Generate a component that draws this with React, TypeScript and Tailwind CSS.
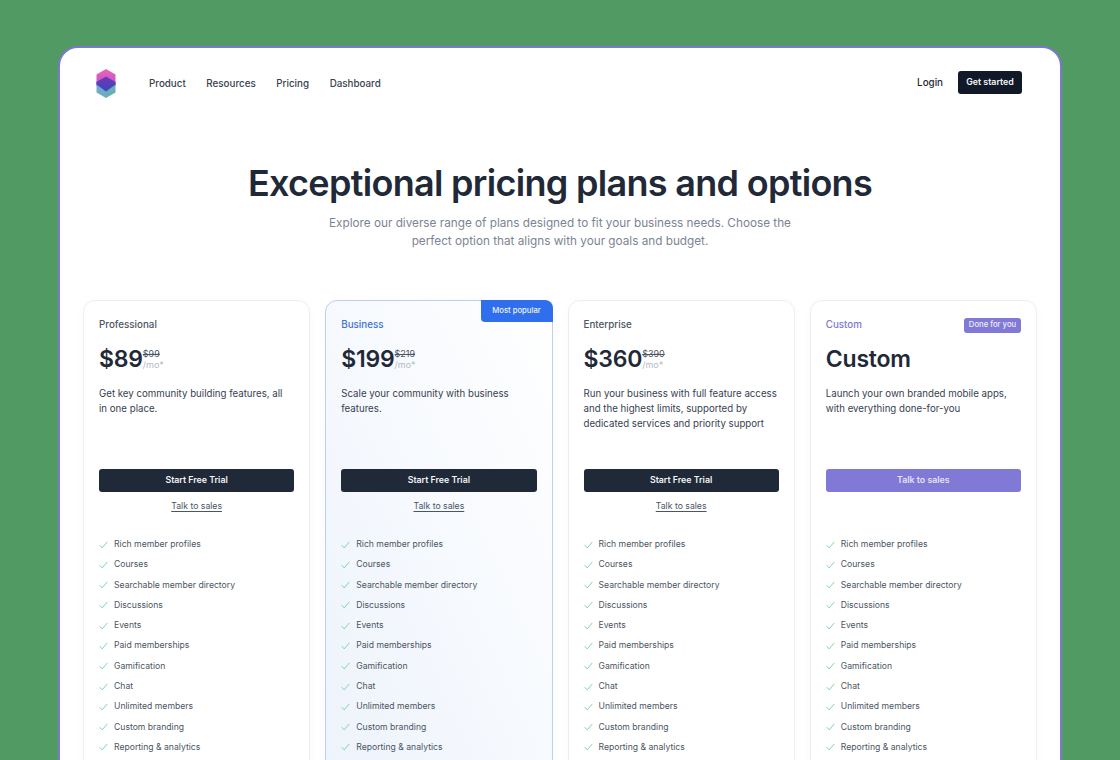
const features = [
  'Rich member profiles',
  'Courses',
  'Searchable member directory',
  'Discussions',
  'Events',
  'Paid memberships',
  'Gamification',
  'Chat',
  'Unlimited members',
  'Custom branding',
  'Reporting & analytics',
]

const plans = [
  { name: 'Professional', price: '$89', old: '$99', text: 'Get key community building features, all in one place.' },
  { name: 'Business', price: '$199', old: '$219', text: 'Scale your community with business features.', popular: true },
  { name: 'Enterprise', price: '$360', old: '$390', text: 'Run your business with full feature access and the highest limits, supported by dedicated services and priority support' },
  { name: 'Custom', price: 'Custom', text: 'Launch your own branded mobile apps, with everything done-for-you', custom: true },
]

function Logo() {
  return (
    <svg width="20" height="29" viewBox="0 0 20 29" className="shrink-0">
      <defs>
        <linearGradient id="logoTop" x1="0" y1="0" x2="0" y2="1">
          <stop offset="0%" stopColor="#ec63bd" />
          <stop offset="100%" stopColor="#b04ec8" />
        </linearGradient>
        <linearGradient id="logoBottom" x1="0" y1="0" x2="1" y2="1">
          <stop offset="0%" stopColor="#7aa6e6" />
          <stop offset="100%" stopColor="#62b3a2" />
        </linearGradient>
        <linearGradient id="logoMid" x1="0" y1="0" x2="0" y2="1">
          <stop offset="0%" stopColor="#7135b8" />
          <stop offset="100%" stopColor="#3a48bb" />
        </linearGradient>
      </defs>
      <path d="M10 0 L19.5 5.5 V17 L10 22 L0.5 17 V5.5 Z" fill="url(#logoTop)" />
      <path d="M0.5 12 L10 17 L19.5 12 V23.5 L10 29 L0.5 23.5 Z" fill="url(#logoBottom)" />
      <path d="M0.5 13 L10 7.5 L19.5 13 V15.5 L10 22.5 L0.5 15.5 Z" fill="url(#logoMid)" />
    </svg>
  )
}

function Check() {
  return (
    <svg width="9" height="8" viewBox="0 0 9 8" fill="none" className="shrink-0">
      <path d="M0.7 4.2 L3.2 6.9 L8.3 0.9" stroke="#6fcfa6" strokeWidth="0.9" />
    </svg>
  )
}

function PlanCard({ plan }: { plan: (typeof plans)[number] }) {
  return (
    <div
      className={
        'relative h-[500px] rounded-[12px] border px-[15px] pt-[16px] shadow-[0_2px_12px_rgba(17,24,39,0.025)] ' +
        (plan.popular
          ? 'border-[#bcd0ec] bg-gradient-to-tr from-[#edf3fc] to-[#ffffff]'
          : 'border-[#eceef1] bg-white')
      }
    >
      {plan.popular && (
        <div className="absolute right-[-1px] top-[-1px] flex h-[22px] w-[72px] items-center justify-center rounded-tr-[8px] rounded-bl-[4px] bg-[#2f6fed] text-[7.7px] font-medium text-[#eef3fe]">
          Most popular
        </div>
      )}
      <div className="flex h-[16px] items-center justify-between">
        <span
          className={
            'text-[9.8px] font-medium ' +
            (plan.popular ? 'text-[#3f72d8]' : plan.custom ? 'text-[#7d78d4]' : 'text-[#4b5563]')
          }
        >
          {plan.name}
        </span>
        {plan.custom && (
          <span className="flex h-[15px] w-[57px] items-center justify-center rounded-[3px] bg-[#8079d6] text-[7.7px] font-medium text-[#eeedfa]">
            Done for you
          </span>
        )}
      </div>
      <div className="mt-[11px] flex h-[30px] items-center">
        <span className="text-[23px] leading-[30px] font-semibold tracking-[-0.2px] text-[#1f2937]">{plan.price}</span>
        {plan.old && (
          <div className="flex flex-col text-[9px] leading-[11px]">
            <span className="text-[#4b5563] line-through">{plan.old}</span>
            <span className="text-[#b4bac4]">/mo*</span>
          </div>
        )}
      </div>
      <p className="mt-[12px] h-[64px] pr-[1.5px] text-[9.7px] leading-[15.2px] text-[#374151]">{plan.text}</p>
      <button
        className={
          'mt-[18.5px] flex h-[23px] w-full items-center justify-center rounded-[3px] text-[8.8px] font-semibold ' +
          (plan.custom ? 'bg-[#8079d6] text-[#e4e2f7]' : 'bg-[#1f2937] text-[#f3f4f6]')
        }
      >
        {plan.custom ? 'Talk to sales' : 'Start Free Trial'}
      </button>
      <div className="mt-[7.5px] h-[15px] text-center text-[8.7px] leading-[15px] text-[#4b5563]">
        {!plan.custom && <span className="underline underline-offset-2">Talk to sales</span>}
      </div>
      <ul className="mt-[23.5px] flex flex-col gap-[6.3px]">
        {features.map((f) => (
          <li key={f} className="flex h-[14px] items-center gap-[6px] text-[8.65px] text-[#4b5563]">
            <Check />
            {f}
          </li>
        ))}
      </ul>
    </div>
  )
}

export default function App() {
  return (
    <div className="h-[760px] w-[1120px] overflow-hidden bg-[#529a64] px-[58px] pt-[46px] font-['Inter',sans-serif]">
      <div className="h-[800px] rounded-t-[20px] border-2 border-[#7a78cf] bg-white px-[23px]">
        <header className="flex h-[70px] items-center justify-between pr-[15px] pl-[13px]">
          <div className="flex items-center">
            <Logo />
            <nav className="mt-[2px] ml-[33px] flex gap-[20.6px] text-[9.8px] font-medium text-[#374151]">
              <span>Product</span>
              <span>Resources</span>
              <span>Pricing</span>
              <span>Dashboard</span>
            </nav>
          </div>
          <div className="flex items-center gap-[15px]">
            <span className="mt-[1px] text-[9.8px] font-medium text-[#1f2937]">Login</span>
            <button className="mb-[2px] flex h-[23px] w-[64px] items-center justify-center rounded-[3px] bg-[#111827] text-[8.8px] font-semibold text-[#f3f4f6]">
              Get started
            </button>
          </div>
        </header>
        <section className="mt-[40px] flex flex-col items-center">
          <h1 className="text-[36px] leading-[50px] font-semibold tracking-[-0.7px] text-[#1f2937]">
            Exceptional pricing plans and options
          </h1>
          <p className="mt-[6px] w-[480px] text-center text-[11.75px] leading-[18px] text-[#7b8494]">
            Explore our diverse range of plans designed to fit your business needs. Choose the perfect option that aligns with your goals and budget.
          </p>
        </section>
        <div className="mt-[50px] grid grid-cols-4 gap-[15px]">
          {plans.map((p) => (
            <PlanCard key={p.name} plan={p} />
          ))}
        </div>
      </div>
    </div>
  )
}
